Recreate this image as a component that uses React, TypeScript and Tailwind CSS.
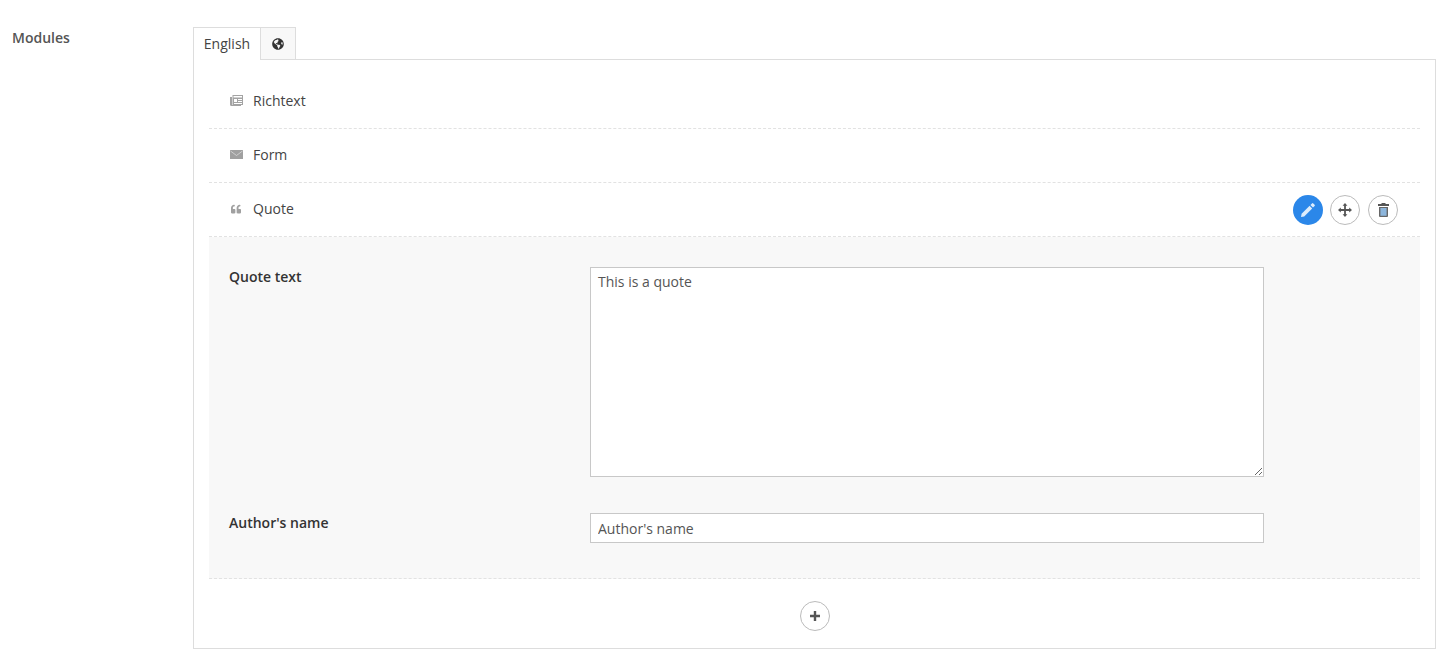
import { FaGlobeAmericas, FaQuoteLeft } from 'react-icons/fa';

const IconRichtext = () => (
  <svg width="13" height="11" viewBox="0 0 13 11" className="text-[#a3a3a3]">
    <path d="M0 2h2v8h9v1H1.5A1.5 1.5 0 0 1 0 9.5z" fill="currentColor" />
    <path fillRule="evenodd" clipRule="evenodd" d="M2.5 0H13v10H2.5zM3.5 1v1.5h8.5V1zM4 4v3h3V4zM8 4v1h4V4zM8 6v1h4V6zM4 8v1h8V8z" fill="currentColor" />
  </svg>
);

const IconMail = () => (
  <svg width="13" height="9" viewBox="0 0 13 9">
    <rect width="13" height="9" fill="#a0a0a0" />
    <path d="M0.5 1 6.5 5.5 12.5 1" fill="none" stroke="#d8d8d8" strokeWidth="0.8" />
  </svg>
);

const IconPencil = () => (
  <svg width="16" height="16" viewBox="0 0 16 16" fill="#dcecfc">
    <path d="M12 1.4a.9.9 0 0 1 1.3 0l1.3 1.3a.9.9 0 0 1 0 1.3L13 5.6 10.4 3z" />
    <path d="M9.6 3.8 12.2 6.4 4.2 14.4 1 15l.6-3.2z" />
  </svg>
);

const IconMove = () => (
  <svg width="14" height="14" viewBox="0 0 14 14" fill="#555">
    <path d="M7 0 9.4 2.8H7.9V6.1H11.2V4.6L14 7l-2.8 2.4V7.9H7.9v3.3h1.5L7 14l-2.4-2.8h1.5V7.9H2.8v1.5L0 7l2.8-2.4v1.5h3.3V2.8H4.6z" />
  </svg>
);

const IconTrash = () => (
  <svg width="11" height="14" viewBox="0 0 11 14">
    <path d="M3.5 0h4v1H11v2H0V1h3.5z" fill="#555" />
    <path d="M1 4h9v9a1 1 0 0 1-1 1H2a1 1 0 0 1-1-1z" fill="#666" />
    <path d="M2.4 5H8.6V12.8H2.4z" fill="#8db6dc" />
  </svg>
);

const IconPlus = () => (
  <svg width="12" height="12" viewBox="0 0 12 12" fill="#555">
    <path d="M4.8 1h2.4v3.8H11v2.4H7.2V11H4.8V7.2H1V4.8h3.8z" />
  </svg>
);

const ModuleRow = ({ icon, label, children }: { icon: React.ReactNode; label: string; children?: React.ReactNode }) => (
  <div className="flex h-[54px] items-center border-b border-dashed border-[#e2e2e2] pl-[20px] pr-[22px]">
    <span className="mb-[2px] flex w-[24px] items-center pl-px">{icon}</span>
    <span className="mb-[2px] text-[#444444]">{label}</span>
    {children}
  </div>
);

const CircleButton = ({ children, className }: { children: React.ReactNode; className?: string }) => (
  <button type="button" className={`flex h-[30px] w-[30px] items-center justify-center rounded-full ${className}`}>
    {children}
  </button>
);

export default function App() {
  return (
    <div className="flex h-[659px] bg-white pl-[12px] pt-[27px] text-[14px] leading-[20px] text-[#444444] [font-family:'Open_Sans',sans-serif]">
      <div className="w-[181px] pt-px font-semibold text-[#555555]">Modules</div>

      <div className="w-[1243px]">
        <div className="relative z-10 flex h-[33px]">
          <div className="flex w-[68px] items-center justify-center border border-b-0 border-[#dddddd] bg-white">English</div>
          <div className="flex h-[33px] w-[35px] items-center justify-center border border-l-0 border-[#dddddd] bg-[#f8f8f8]">
            <FaGlobeAmericas className="text-[12px] text-[#333333]" />
          </div>
        </div>

        <div className="-mt-px h-[590px] border border-[#dddddd] px-[15px] pt-[15px]">
          <ModuleRow icon={<IconRichtext />} label="Richtext" />
          <ModuleRow icon={<IconMail />} label="Form" />
          <ModuleRow icon={<FaQuoteLeft className="ml-px text-[10px] text-[#a0a0a0]" />} label="Quote">
            <div className="ml-auto flex gap-[8px]">
              <CircleButton className="-mr-px bg-[#2b87e9]"><IconPencil /></CircleButton>
              <CircleButton className="border border-[#bbbbbb]"><IconMove /></CircleButton>
              <CircleButton className="border border-[#bbbbbb]"><IconTrash /></CircleButton>
            </div>
          </ModuleRow>

          <div className="h-[342px] border-b border-dashed border-[#e2e2e2] bg-[#f8f8f8] pl-[20px] pt-[30px]">
            <div className="flex">
              <label className="w-[361px] font-semibold text-[#333333]">Quote text</label>
              <textarea
                readOnly
                defaultValue="This is a quote"
                className="h-[210px] w-[674px] border border-[#c8c8c8] bg-white px-[7px] py-[4px] text-[#555555]"
              />
            </div>
            <div className="mt-[36px] flex">
              <label className="w-[361px] font-semibold text-[#333333]">Author's name</label>
              <input
                readOnly
                placeholder="Author's name"
                className="h-[30px] w-[674px] border border-[#c8c8c8] bg-white px-[7px] text-[#555555] placeholder:text-[#555555]"
              />
            </div>
          </div>

          <div className="flex justify-center pt-[22px]">
            <CircleButton className="border border-[#bbbbbb]"><IconPlus /></CircleButton>
          </div>
        </div>
      </div>
    </div>
  );
}
